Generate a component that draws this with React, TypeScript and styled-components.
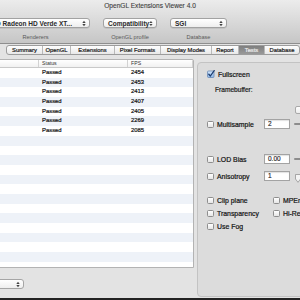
import * as React from "react";
import styled, { createGlobalStyle } from "styled-components";

const GlobalStyle = createGlobalStyle`
  html, body {
    margin: 0;
    padding: 0;
    background: #232323;
    overflow: hidden;
  }
  body {
    font-family: "Liberation Sans", Arial, sans-serif;
  }
`;

const tabs = [
  { label: "Summary", width: 35 },
  { label: "OpenGL", width: 28 },
  { label: "Extensions", width: 44 },
  { label: "Pixel Formats", width: 46 },
  { label: "Display Modes", width: 51 },
  { label: "Report", width: 27 },
  { label: "Tests", width: 26, active: true },
  { label: "Database", width: 35 },
];

const fps = ["2454", "2453", "2413", "2407", "2405", "2269", "2085"];

export default function App() {
  const rows = Array.from({ length: 22 }, (_, i) => i);

  return (
    <Window>
      <GlobalStyle />
      <Toolbar>
        <Title>OpenGL Extensions Viewer 4.0</Title>
        <ToolRow>
          <ToolItem $width={109}>
            <Popup>
              <PopupText>AMD Radeon HD Verde XT...</PopupText>
              <Arrows />
            </Popup>
            <ToolLabel>Renderers</ToolLabel>
          </ToolItem>
          <ToolItem $width={54}>
            <Popup>
              <PopupText>Compatibility</PopupText>
              <Arrows />
            </Popup>
            <ToolLabel>OpenGL profile</ToolLabel>
          </ToolItem>
          <ToolItem $width={57}>
            <Popup>
              <PopupText>SGI</PopupText>
              <Arrows />
            </Popup>
            <ToolLabel>Database</ToolLabel>
          </ToolItem>
        </ToolRow>
      </Toolbar>

      <Content>
        <Segmented>
          {tabs.map((t) => (
            <Segment key={t.label} $width={t.width} $active={!!t.active}>
              {t.label}
            </Segment>
          ))}
        </Segmented>

        <Main>
          <LeftColumn>
            <Table>
              <HeaderRow>
                <HeadCell $width={40} />
                <HeadCell $width={89}>Status</HeadCell>
                <HeadCell $width={65}>FPS</HeadCell>
              </HeaderRow>
              {rows.map((i) => (
                <Row key={i} $striped={i % 2 === 1}>
                  <Cell $width={40} />
                  <Cell $width={89}>{i < fps.length ? "Passed" : ""}</Cell>
                  <Cell $width={65}>{i < fps.length ? fps[i] : ""}</Cell>
                </Row>
              ))}
            </Table>
            <BottomPopup>
              <Arrows />
            </BottomPopup>
          </LeftColumn>

          <GroupBox>
            <OptionRow $mt={6.5}>
              <CheckedBox />
              <OptionLabel>Fullscreen</OptionLabel>
            </OptionRow>
            <SubLabel>Framebuffer:</SubLabel>
            <ButtonRow>
              <SmallButton />
            </ButtonRow>
            <InputRow $mt={5}>
              <Box />
              <OptionLabel $width={47}>Multisample</OptionLabel>
              <NumberField>2</NumberField>
              <SliderLine />
            </InputRow>
            <InputRow $mt={25}>
              <Box />
              <OptionLabel $width={47}>LOD Bias</OptionLabel>
              <NumberField>0.00</NumberField>
              <SliderLine />
            </InputRow>
            <InputRow $mt={7}>
              <Box />
              <OptionLabel $width={47}>Anisotropy</OptionLabel>
              <NumberField>1</NumberField>
              <Knob />
            </InputRow>
            <CheckGrid $mt={14.5}>
              <OptionRow>
                <Box />
                <OptionLabel>Clip plane</OptionLabel>
              </OptionRow>
              <OptionRow>
                <Box />
                <OptionLabel>MPEngine</OptionLabel>
              </OptionRow>
              <OptionRow>
                <Box />
                <OptionLabel>Transparency</OptionLabel>
              </OptionRow>
              <OptionRow>
                <Box />
                <OptionLabel>Hi-Res</OptionLabel>
              </OptionRow>
              <OptionRow>
                <Box />
                <OptionLabel>Use Fog</OptionLabel>
              </OptionRow>
            </CheckGrid>
          </GroupBox>
        </Main>
      </Content>
    </Window>
  );
}

function Arrows() {
  return (
    <svg width="4" height="7" viewBox="0 0 4 7">
      <path d="M0.3 3 L2 0.8 L3.7 3 Z" fill="#444" />
      <path d="M0.3 4 L2 6.2 L3.7 4 Z" fill="#444" />
    </svg>
  );
}

function CheckedBox() {
  return (
    <svg width="8" height="8" viewBox="0 0 8 8" style={{ flexShrink: 0 }}>
      <defs>
        <linearGradient id="cb" x1="0" y1="0" x2="0" y2="1">
          <stop offset="0" stopColor="#d3e6fb" />
          <stop offset="1" stopColor="#8fb8ea" />
        </linearGradient>
      </defs>
      <rect x="0.5" y="1" width="6.5" height="6.5" rx="1" fill="url(#cb)" stroke="#5d7fae" strokeWidth="0.7" />
      <path d="M1.8 4.2 L3.4 6 L7.2 0.6" fill="none" stroke="#1d3d70" strokeWidth="1.3" strokeLinecap="round" strokeLinejoin="round" />
    </svg>
  );
}

function Knob() {
  return (
    <svg width="6" height="9" viewBox="0 0 6 9" style={{ marginLeft: 2, marginTop: 5, flexShrink: 0 }}>
      <path d="M0.5 0.5 H5.5 V5 L3 8.3 L0.5 5 Z" fill="#f4f4f4" stroke="#8a8a8a" strokeWidth="0.7" />
    </svg>
  );
}

const Window = styled.div`
  width: 300px;
  height: 298px;
  display: flex;
  flex-direction: column;
  overflow: hidden;
  background: #e3e3e3;
`;

const Toolbar = styled.header`
  height: 43px;
  flex-shrink: 0;
  display: flex;
  flex-direction: column;
  background: linear-gradient(#ececec, #d9d9d9 50%, #c6c6c6);
  border-bottom: 1px solid #8e8e8e;
`;

const Title = styled.div`
  height: 12px;
  line-height: 12px;
  text-align: center;
  font-size: 6.6px;
  color: #3c3c3c;
  -webkit-text-stroke: 0.1px #3c3c3c;
`;

const ToolRow = styled.div`
  display: flex;
  gap: 13px;
  margin-top: 6px;
  margin-left: -19px;
`;

const ToolItem = styled.div<{ $width: number }>`
  width: ${(p) => p.$width}px;
  flex-shrink: 0;
  display: flex;
  flex-direction: column;
  align-items: center;
`;

const Popup = styled.div`
  box-sizing: border-box;
  width: 100%;
  height: 10px;
  display: flex;
  align-items: center;
  justify-content: space-between;
  padding: 0 3px 0 4px;
  border: 1px solid #a2a2a2;
  border-radius: 3px;
  background: linear-gradient(#ffffff, #eeeeee);
  box-shadow: 0 0.5px 0.5px rgba(0, 0, 0, 0.15);
`;

const PopupText = styled.span`
  font-size: 6.5px;
  font-weight: 700;
  color: #2a2a2a;
  white-space: nowrap;
`;

const ToolLabel = styled.div`
  margin-top: 5px;
  line-height: 8px;
  font-size: 5.6px;
  color: #5a5a5a;
  white-space: nowrap;
`;

const Content = styled.div`
  flex: 1;
  display: flex;
  flex-direction: column;
`;

const Segmented = styled.div`
  display: flex;
  margin: 1px 0 0 6px;
  height: 10px;
  box-sizing: border-box;
  border: 1px solid #9c9c9c;
  border-radius: 3px;
  width: max-content;
  overflow: hidden;
  background: linear-gradient(#fefefe, #e8e8e8);
`;

const Segment = styled.div<{ $width: number; $active: boolean }>`
  width: ${(p) => p.$width}px;
  box-sizing: border-box;
  display: flex;
  align-items: center;
  justify-content: center;
  font-size: 5.8px;
  white-space: nowrap;
  color: ${(p) => (p.$active ? "#ececec" : "#1a1a1a")};
  -webkit-text-stroke: 0.2px ${(p) => (p.$active ? "#ececec" : "#1a1a1a")};
  background: ${(p) =>
    p.$active ? "linear-gradient(#7f7f7f, #999999)" : "transparent"};
  & + & {
    border-left: 1px solid #b9b9b9;
  }
`;

const Main = styled.div`
  display: flex;
  gap: 3px;
  margin-top: 4px;
  flex: 1;
`;

const LeftColumn = styled.div`
  width: 194px;
  flex-shrink: 0;
  display: flex;
  flex-direction: column;
`;

const Table = styled.div`
  height: 209px;
  box-sizing: border-box;
  margin-left: -2px;
  border: 1px solid #b3b3b3;
  border-radius: 0 2px 0 0;
  background: #ffffff;
  overflow: hidden;
`;

const HeaderRow = styled.div`
  display: flex;
  height: 7px;
  border-bottom: 1px solid #c9c9c9;
  background: linear-gradient(#ffffff, #f1f1f1);
`;

const HeadCell = styled.div<{ $width: number }>`
  width: ${(p) => p.$width}px;
  box-sizing: border-box;
  padding-left: 3px;
  font-size: 5.2px;
  line-height: 7px;
  color: #333;
  border-right: 1px solid #d2d2d2;
  &:first-child {
    padding-left: 0;
  }
`;

const Row = styled.div<{ $striped: boolean }>`
  display: flex;
  height: 9.7px;
  background: ${(p) => (p.$striped ? "#eef2f8" : "#ffffff")};
`;

const Cell = styled.div<{ $width: number }>`
  width: ${(p) => p.$width}px;
  box-sizing: border-box;
  padding-left: 3px;
  font-size: 5.9px;
  line-height: 9.7px;
  color: #111;
  -webkit-text-stroke: 0.2px #111;
`;

const BottomPopup = styled.div`
  margin: 11px 0 0 -40px;
  width: 64px;
  height: 10px;
  box-sizing: border-box;
  display: flex;
  align-items: center;
  justify-content: flex-end;
  padding-right: 3px;
  border: 1px solid #a5a5a5;
  border-radius: 3px;
  background: linear-gradient(#ffffff, #eeeeee);
`;

const GroupBox = styled.section`
  margin-top: 3px;
  width: 170px;
  height: 235px;
  flex-shrink: 0;
  box-sizing: border-box;
  padding-left: 9px;
  border: 1px solid #c3c3c3;
  border-radius: 4px;
  background: #dcdcdc;
  display: flex;
  flex-direction: column;
`;

const OptionRow = styled.div<{ $mt?: number }>`
  display: flex;
  align-items: center;
  gap: 3px;
  height: 9px;
  margin-top: ${(p) => p.$mt ?? 0}px;
`;

const InputRow = styled.div<{ $mt: number }>`
  display: flex;
  align-items: center;
  gap: 3px;
  height: 10px;
  margin-top: ${(p) => p.$mt}px;
`;

const OptionLabel = styled.span<{ $width?: number }>`
  width: ${(p) => (p.$width ? `${p.$width}px` : "auto")};
  flex-shrink: 0;
  font-size: 6.9px;
  color: #111;
  -webkit-text-stroke: 0.2px #111;
  white-space: nowrap;
`;

const SubLabel = styled.div`
  margin: 6px 0 0 8px;
  height: 9px;
  line-height: 9px;
  font-size: 6.6px;
  color: #1a1a1a;
  -webkit-text-stroke: 0.2px #1a1a1a;
`;

const ButtonRow = styled.div`
  display: flex;
  margin-top: 12.5px;
  padding-left: 88px;
`;

const SmallButton = styled.div`
  width: 14px;
  height: 6px;
  border: 1px solid #a9a9a9;
  border-radius: 2px;
  background: linear-gradient(#ffffff, #ececec);
`;

const Box = styled.div`
  width: 7px;
  height: 7px;
  flex-shrink: 0;
  box-sizing: border-box;
  border: 1px solid #8e8e8e;
  border-radius: 1.5px;
  background: linear-gradient(#ffffff, #e6e6e6);
`;

const NumberField = styled.div`
  width: 26px;
  height: 10px;
  flex-shrink: 0;
  box-sizing: border-box;
  margin-left: -3px;
  padding-left: 3px;
  border: 1px solid #a3a3a3;
  background: #ffffff;
  box-shadow: inset 0 1px 1px rgba(0, 0, 0, 0.12);
  font-size: 6.5px;
  line-height: 8px;
  color: #1f1f1f;
  -webkit-text-stroke: 0.15px #1f1f1f;
`;

const SliderLine = styled.div`
  width: 20px;
  height: 1.5px;
  margin-left: 1px;
  background: #8c8c8c;
  border-radius: 1px;
`;

const CheckGrid = styled.div<{ $mt: number }>`
  display: grid;
  grid-template-columns: 66px auto;
  row-gap: 4px;
  margin-top: ${(p) => p.$mt}px;
`;
